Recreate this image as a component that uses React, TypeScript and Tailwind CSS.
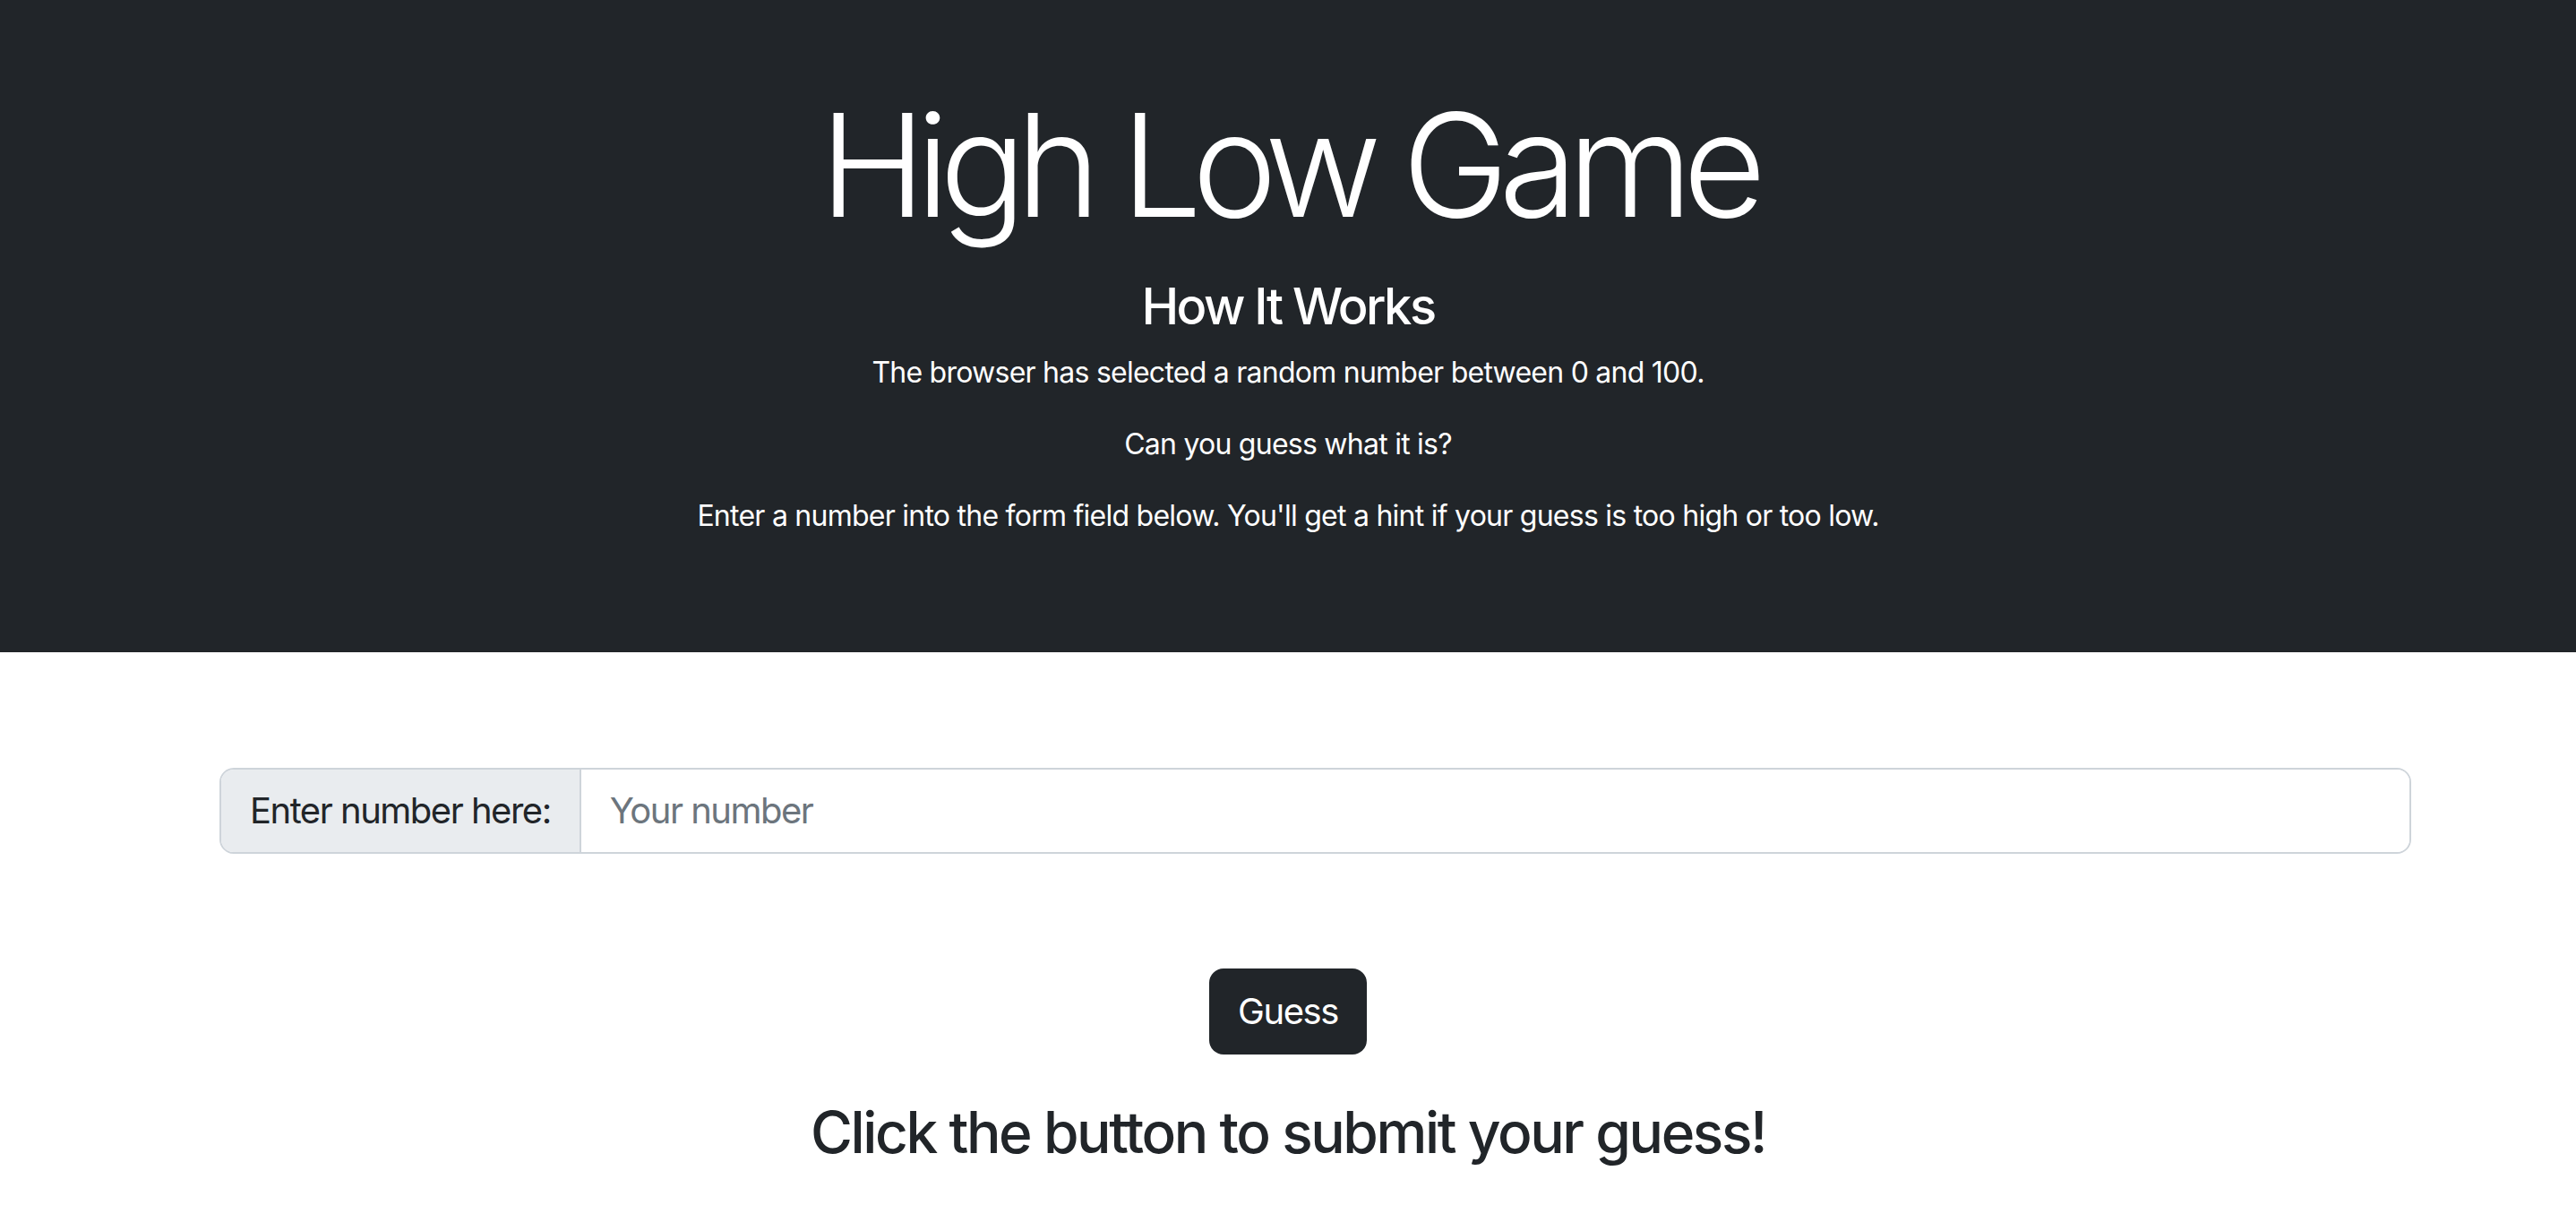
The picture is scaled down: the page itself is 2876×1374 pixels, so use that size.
import React from 'react';

const font = { fontFamily: 'Inter, "Noto Sans", sans-serif' };

const App = () => {
  return (
    <div className="min-h-screen bg-white text-[#212529]" style={font}>
      {/* Header band */}
      <div className="bg-[#212529] text-white text-center pt-[88px] pb-[96px]">
        <h1 className="text-[160px] leading-[192px] font-light tracking-[-11px] mb-[29px]">High Low Game</h1>
        <h3 className="text-[56px] leading-[67px] font-medium tracking-[-2.5px] mb-[16px]">How It Works</h3>
        <div className="text-[32px] leading-[48px] tracking-[-0.75px]">
          <p className="mb-[32px]">The browser has selected a random number between 0 and 100.</p>
          <p className="mb-[32px]">Can you guess what it is?</p>
          <p className="mb-[32px]">
            Enter a number into the form field below. You'll get a hint if your guess is too high or too low.
          </p>
        </div>
      </div>

      {/* Form */}
      <div className="pl-[245px] pr-[184px] pt-[129px]">
        <div className="flex h-[96px] border-2 border-[#ced4da] rounded-[16px] overflow-hidden">
          <span className="flex items-center px-[32px] bg-[#e9ecef] border-r-2 border-[#ced4da] text-[40px] tracking-[-1.5px] whitespace-nowrap">
            Enter number here:
          </span>
          <input
            type="number"
            placeholder="Your number"
            className="flex-1 px-[32px] text-[40px] tracking-[-1.5px] outline-none placeholder:text-[#6c757d] bg-white"
          />
        </div>
      </div>

      <div className="flex flex-col items-center pt-[128px]">
        <button className="h-[96px] px-[32px] rounded-[16px] bg-[#212529] text-white text-[40px] tracking-[-1.4px]">
          Guess
        </button>
        <h2 className="mt-[48px] text-[64px] leading-[77px] font-medium tracking-[-2.4px]">
          Click the button to submit your guess!
        </h2>
      </div>
    </div>
  );
};

export default App;
